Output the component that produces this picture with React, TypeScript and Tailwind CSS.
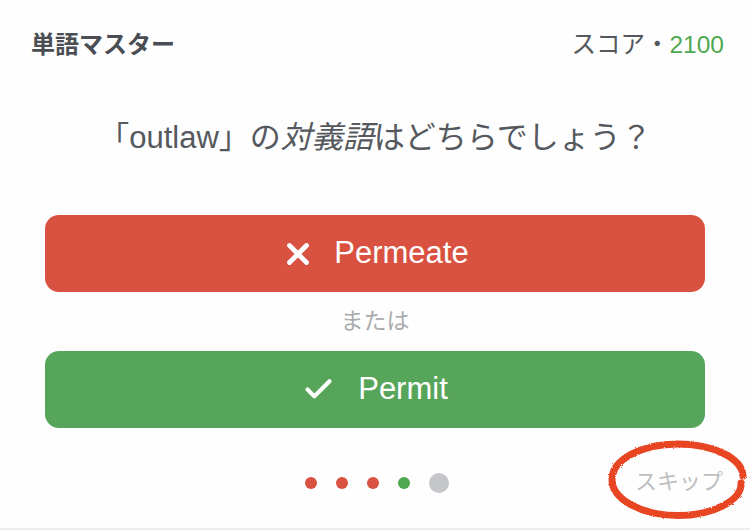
import { Check, X } from "lucide-react";

const jp = "font-['Liberation_Sans','Noto_Sans_CJK_JP',sans-serif]";

function Dot({ color, big }: { color: string; big?: boolean }) {
  return <span className={`${big ? "h-[20px] w-[20px]" : "h-[12px] w-[12px]"} rounded-full ${color}`} />;
}

// hand-drawn marker circle around the skip link
function Scribble() {
  return (
    <svg className="absolute inset-0" width="140" height="80" viewBox="0 0 140 80" fill="none">
      <defs>
        <filter id="rough" x="-10%" y="-10%" width="120%" height="120%">
          <feTurbulence type="fractalNoise" baseFrequency="0.9" numOctaves="2" seed="3" />
          <feDisplacementMap in="SourceGraphic" scale="2.5" />
        </filter>
      </defs>
      <path
        d="M135 36 C134 18 105 4 69.5 4 C33 4 4 20 4 39.5 C4 59 33 75.5 69.5 75.5 C106 75.5 134 60 133 43"
        stroke="#e84424"
        strokeWidth="7"
        strokeLinecap="round"
        filter="url(#rough)"
      />
    </svg>
  );
}

export default function App() {
  return (
    <div className={`relative h-[530px] w-[750px] overflow-hidden bg-[#fefefe] ${jp}`}>
      <div className="mt-[29px] flex h-[32px] items-center justify-between pl-[31px] pr-[26px]">
        <h1 className="text-[24px] font-bold leading-[32px] text-[#4a4e54]">単語マスター</h1>
        <div className="text-[24.5px] leading-[32px] text-[#55595e]">
          スコア・<span className="text-[#4fa852]">2100</span>
        </div>
      </div>

      <p className="mt-[57px] text-center text-[31px] leading-[40px] text-[#55595e]">
        「outlaw」の<i>対義語</i>はどちらでしょう？
      </p>

      <div className="mt-[57px] flex flex-col px-[45px]">
        <button className="flex h-[77px] items-center justify-center gap-[19px] rounded-[14px] bg-[#d95140] text-[31px] text-white">
          <X size={34} strokeWidth={3.4} />
          <span>Permeate</span>
        </button>
        <div className="flex h-[59px] items-center justify-center text-[23px] text-[#a9abad]">または</div>
        <button className="flex h-[77px] items-center justify-center gap-[23px] rounded-[14px] bg-[#57a55b] text-[31px] text-white">
          <Check size={33} strokeWidth={3} />
          <span>Permit</span>
        </button>
      </div>

      <div className="mt-[45px] flex h-[20px] items-center justify-center gap-[19px] pl-[4px]">
        <Dot color="bg-[#d95140]" />
        <Dot color="bg-[#d95140]" />
        <Dot color="bg-[#d95140]" />
        <Dot color="bg-[#4fa852]" />
        <Dot color="bg-[#c4c6ca]" big />
      </div>

      <div className="absolute left-[608px] top-[440px] flex h-[80px] w-[140px] items-center justify-center">
        <span className="pl-[2px] pt-[2px] text-[22px] text-[#bdbfc1]">スキップ</span>
        <Scribble />
      </div>

      <div className="absolute bottom-0 left-0 h-[2px] w-full bg-[#ececec]" />
    </div>
  );
}
